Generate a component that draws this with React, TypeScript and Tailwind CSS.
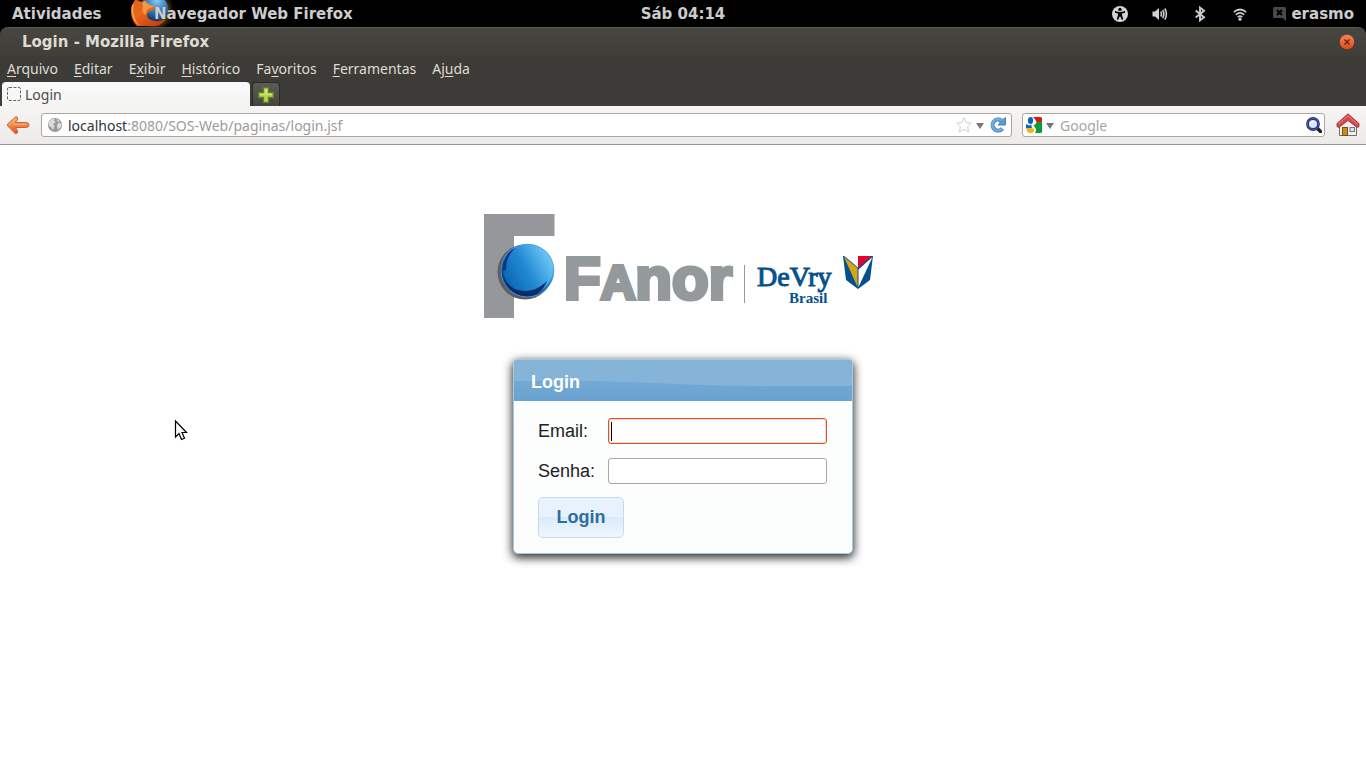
import type { ReactNode } from 'react';

const dejavu = "font-['DejaVu_Sans',sans-serif]";
const noto = "font-['Noto_Sans',sans-serif]";

function FirefoxLogo() {
  return (
    <svg width="46" height="27" viewBox="0 0 46 27" aria-hidden="true">
      <defs>
        <radialGradient id="globe" cx="0.6" cy="0.2" r="0.8">
          <stop offset="0" stopColor="#8fcaf0" />
          <stop offset="0.5" stopColor="#2f78bd" />
          <stop offset="1" stopColor="#0b2a55" />
        </radialGradient>
        <linearGradient id="fox" x1="0" y1="0" x2="0.7" y2="1">
          <stop offset="0" stopColor="#e0601c" />
          <stop offset="0.5" stopColor="#e8671d" />
          <stop offset="1" stopColor="#c8400c" />
        </linearGradient>
        <radialGradient id="tail" cx="0.5" cy="0.5" r="0.5">
          <stop offset="0.6" stopColor="#c98a22" />
          <stop offset="1" stopColor="#000000" />
        </radialGradient>
      </defs>
      <ellipse cx="25" cy="11" rx="19" ry="20" fill="url(#tail)" opacity="0.5" />
      <circle cx="24" cy="9" r="14" fill="url(#globe)" />
      <path d="M5 0C0 6 -1 18 7 26H26C31 25 34 22 35 19C30 22 22 22 18 18C16 15 17 12 21 11C23 10 25 8 25 6C21 6 17 4 15 0L12 2L7 0Z" fill="url(#fox)" />
      <path d="M12 3L15 1C17 4 21 6 25 6L20 8C17 9 15 12 16 15C12 13 12 9 13 6Z" fill="#f39a43" />
      <path d="M4 4C2 12 4 20 10 26C4 23 0 14 2 5Z" fill="#f4a04c" />
    </svg>
  );
}

function TopBar() {
  return (
    <header className={`grid h-[27px] grid-cols-[1fr_auto_1fr] items-center bg-black text-[15px] leading-5 font-bold text-[#cccccc] ${dejavu}`}>
      <div className="flex items-center pl-3">
        <button type="button" className="w-[118px] text-left">Atividades</button>
        <button type="button" className="grid h-[27px] items-center text-left">
          <span className="col-start-1 row-start-1"><FirefoxLogo /></span>
          <span className="col-start-1 row-start-1 pl-6 whitespace-nowrap">Navegador Web Firefox</span>
        </button>
      </div>
      <button type="button">Sáb 04:14</button>
      <div className="flex items-center justify-end gap-5 pr-3">
        <button type="button" aria-label="Acessibilidade" className="flex w-5 justify-center">
          <svg width="16" height="16" viewBox="0 0 16 16">
            <circle cx="8" cy="8" r="8" fill="#d2d2d2" />
            <circle cx="8" cy="3.4" r="1.7" fill="#000" />
            <path d="M3 5L7 6H9L13 5V6.8L10 7.4V9L11.3 13.3L9.8 13.8L8 10L6.2 13.8L4.7 13.3L6 9V7.4L3 6.8Z" fill="#000" />
          </svg>
        </button>
        <button type="button" aria-label="Volume" className="flex w-5 justify-center">
          <svg width="16" height="16" viewBox="0 0 16 16" fill="none" stroke="#cccccc" strokeWidth="1.6">
            <path d="M0.500 5.500H3L7 2V14L3 10.500H0.500Z" fill="#d2d2d2" stroke="none" />
            <path d="M8.700 5.500Q10.300 8 8.700 10.500M10.700 4Q13 8 10.700 12M12.800 2.500Q16 8 12.800 13.500" />
          </svg>
        </button>
        <button type="button" aria-label="Bluetooth" className="flex w-5 justify-center">
          <svg width="16" height="16" viewBox="0 0 16 16" fill="none" stroke="#cccccc" strokeWidth="1.900">
            <path d="M3.700 4.500L12 11.300L8 14.400V1.600L12 4.700L3.700 11.500" />
          </svg>
        </button>
        <button type="button" aria-label="Rede sem fio" className="flex w-5 justify-center">
          <svg width="16" height="16" viewBox="0 0 16 16" fill="none" stroke="#cccccc" strokeWidth="1.700">
            <path d="M1.800 6.200Q8 0.800 14.200 6.200M3.800 8.700Q8 5 12.200 8.700M5.800 11Q8 9.200 10.200 11" />
            <circle cx="8" cy="13.200" r="1.600" fill="#cccccc" stroke="none" />
          </svg>
        </button>
        <button type="button" className="ml-[2px] flex items-center gap-1">
          <svg width="15" height="16" viewBox="0 0 15 16" aria-hidden="true">
            <path d="M2.500 1H12.500Q14 1 14 2.500V15L10.500 12H2.500Q1 12 1 10.500V2.500Q1 1 2.500 1Z" fill="#494949" />
            <path d="M5 4L10 9M10 4L5 9" stroke="#000" strokeWidth="2" />
          </svg>
          <span>erasmo</span>
        </button>
      </div>
    </header>
  );
}

function TitleBar() {
  return (
    <div className="bg-black">
      <div className={`flex h-[29px] items-center justify-between rounded-t-lg border-t border-[#5a5852] bg-linear-to-b from-[#474641] to-[#3f3e39] pr-[11px] pl-[22px] text-[15px] leading-5 font-bold text-[#dfdbd2] ${dejavu}`}>
        <h1>Login - Mozilla Firefox</h1>
        <button type="button" aria-label="Fechar janela">
          <svg width="16" height="16" viewBox="0 0 16 16">
            <defs>
              <linearGradient id="close" x1="0" y1="0" x2="0" y2="1">
                <stop offset="0" stopColor="#f78357" />
                <stop offset="1" stopColor="#df4a1b" />
              </linearGradient>
            </defs>
            <circle cx="8" cy="8" r="7.700" fill="url(#close)" stroke="#33322e" strokeWidth="0.600" />
            <path d="M5.500 5.500L10.500 10.500M10.500 5.500L5.500 10.500" stroke="#5b2413" strokeWidth="1.300" />
          </svg>
        </button>
      </div>
    </div>
  );
}

function MenuItem({ children }: { children: ReactNode }) {
  return <button type="button" className="decoration-1 underline-offset-2">{children}</button>;
}

function MenuBar() {
  return (
    <nav className={`flex h-[26px] items-center gap-4 bg-[#3c3b37] px-[7px] pb-[2px] text-[14px] text-[#dfdbd2] ${noto}`}>
      <MenuItem><u>A</u>rquivo</MenuItem>
      <MenuItem><u>E</u>ditar</MenuItem>
      <MenuItem>E<u>x</u>ibir</MenuItem>
      <MenuItem><u>H</u>istórico</MenuItem>
      <MenuItem>Fa<u>v</u>oritos</MenuItem>
      <MenuItem><u>F</u>erramentas</MenuItem>
      <MenuItem>Aj<u>u</u>da</MenuItem>
    </nav>
  );
}

function TabBar() {
  return (
    <div className={`flex h-6 gap-[2px] bg-[#3c3b37] px-[2px] text-[14px] text-[#4c4c4c] ${noto}`}>
      <button type="button" className="flex h-full w-[248px] items-center gap-1 rounded-t bg-linear-to-b from-[#fafafa] to-[#f4f4f3] pl-[5px]">
        <svg width="14" height="14" viewBox="0 0 14 14" aria-hidden="true">
          <rect x="0.500" y="0.500" width="13" height="13" rx="1.500" fill="none" stroke="#666" strokeDasharray="3 1.500" />
        </svg>
        Login
      </button>
      <button type="button" aria-label="Nova aba" className="flex h-full w-7 items-center justify-center rounded-t border border-b-0 border-[#2b2a27] bg-linear-to-b from-[#5d5b55] to-[#44433e]">
        <svg width="16" height="16" viewBox="0 0 16 16">
          <path d="M5.500 0.700H10.500V5.500H15.300V10.500H10.500V15.300H5.500V10.500H0.700V5.500H5.500Z" fill="#b7d44c" stroke="#62812d" strokeWidth="1.300" />
          <path d="M6.800 2H9.200V6.800H14V8H2V6.800H6.800Z" fill="#d0e47a" />
        </svg>
      </button>
    </div>
  );
}

function DownArrow() {
  return (
    <svg width="8" height="8" viewBox="0 0 8 8" aria-hidden="true">
      <path d="M0 2H8L4 8Z" fill="#777777" />
    </svg>
  );
}

function Toolbar() {
  return (
    <div className={`flex h-[39px] items-center border-b border-[#979797] bg-linear-to-b from-[#f6f5f4] to-[#edebea] pr-[6px] pl-[6px] text-[14px] ${noto}`}>
      <button type="button" aria-label="Voltar" className="mr-[11px]">
        <svg width="24" height="22" viewBox="0 0 24 22">
          <defs>
            <linearGradient id="back" x1="0" y1="0" x2="0" y2="1">
              <stop offset="0" stopColor="#f5b063" />
              <stop offset="0.500" stopColor="#ef8a48" />
              <stop offset="1" stopColor="#e5501d" />
            </linearGradient>
          </defs>
          <path d="M10 2.500Q12 2.800 11.700 5L9.500 8.500H20.500Q23 8.700 23 11Q23 13.300 20.500 13.500H9.500L11.700 17Q12 19.500 9.500 19.800L1.200 11.500V10.500Z" fill="url(#back)" stroke="#cf5728" strokeWidth="0.900" strokeLinejoin="round" />
          <path d="M3 11L9 5.200M7 10.200H20" stroke="#fbd09a" strokeWidth="1.100" opacity="0.500" />
        </svg>
      </button>
      <div className="flex h-6 flex-1 items-center rounded-[3px] border border-[#a9a59f] bg-white px-[5px]">
        <svg width="16" height="16" viewBox="0 0 16 16" aria-hidden="true">
          <circle cx="8" cy="8" r="7" fill="#999999" />
          <path d="M2 5L5 2.200L8 2L7 4L9 5L6 7L7.500 9L6 13L4 10L2 9ZM9 2L13 4L11 5ZM11 6L14.500 6.500L14 9.500L11 13L10 9Z" fill="#dddddd" />
        </svg>
        <a href="#login" className="ml-[5px] flex-1 text-[#9b9b9b]">
          <span className="text-[#2e3436]">localhost</span>:8080/SOS-Web/paginas/login.jsf
        </a>
        <button type="button" aria-label="Adicionar aos favoritos">
          <svg width="16" height="16" viewBox="0 0 16 16">
            <path d="M8 0.800L10.200 5.600L15.400 6.200L11.600 9.700L12.600 14.900L8 12.300L3.400 14.900L4.400 9.700L0.600 6.200L5.800 5.600Z" fill="#fff" stroke="#cfcfcf" />
          </svg>
        </button>
        <button type="button" aria-label="Histórico de endereços" className="ml-1"><DownArrow /></button>
        <button type="button" aria-label="Recarregar" className="ml-[6px]">
          <svg width="16" height="16" viewBox="0 0 16 16" fill="none">
            <path d="M12.500 11.600A5.600 5.600 0 1 1 11.500 3.500" stroke="#4a84c0" strokeWidth="4" />
            <path d="M15.500 0.500V8H8L10.600 5.400L8.800 4.800L12.500 2.800Z" fill="#5d99d2" stroke="#4a84c0" />
            <path d="M12 11.800A5.600 5.600 0 1 1 11.500 3.500" stroke="#79afe0" strokeWidth="2" />
          </svg>
        </button>
      </div>
      <div className="ml-[10px] flex h-6 w-[303px] items-center rounded-[3px] border border-[#a9a59f] bg-white pr-[2px] pl-[3px]">
        <button type="button" aria-label="Mecanismo de busca" className="flex items-center gap-1">
          <svg width="16" height="16" viewBox="0 0 16 16">
            <path d="M7 0H14.500Q16 0 16 1.500V6L10.500 5Q10 3 7 0Z" fill="#ee1111" />
            <path d="M10.500 5L16 4.500V14.500Q16 16 14.500 16H9Q11 13 9 10.500L7.500 8.500Q10 8 10.500 5Z" fill="#0d9a3c" />
            <ellipse cx="4.500" cy="3.500" rx="2.600" ry="3.500" fill="#0d5fc4" />
            <path d="M0 7L3 8.500L5.500 7.500Q5 10 6.500 11L0 11.500Z" fill="#0d5fc4" />
            <ellipse cx="4.500" cy="13.500" rx="3.700" ry="2.400" fill="#f2b50c" />
          </svg>
          <DownArrow />
        </button>
        <input type="search" aria-label="Pesquisar" placeholder="Google" className="ml-[6px] min-w-0 flex-1 bg-transparent outline-none placeholder:text-[#a5a5a5]" />
        <button type="button" aria-label="Buscar">
          <svg width="16" height="16" viewBox="0 0 16 16">
            <path d="M10.500 10.500L14.500 14.500" stroke="#222" strokeWidth="3.500" strokeLinecap="round" />
            <circle cx="7" cy="7" r="5.500" fill="#d9e6f7" stroke="#26357f" strokeWidth="2.800" />
            <circle cx="7" cy="7" r="5.600" fill="none" stroke="#4d61b2" strokeWidth="0.800" />
            <path d="M5 6Q6 4.500 8 4.800" stroke="#fff" strokeWidth="1.500" fill="none" />
          </svg>
        </button>
      </div>
      <button type="button" aria-label="Página inicial" className="ml-[11px]">
        <svg width="24" height="24" viewBox="0 0 24 24">
          <path d="M3.500 11L12 4L20.500 11V22.500H3.500Z" fill="#f1f1ef" stroke="#6c6c6a" />
          <path d="M12 0.800L23 10.500V13.500Q22 14.800 20.500 14L12 7.500L3.500 14Q2 14.800 1 13.500V10.500Z" fill="#cf4a4a" stroke="#ad3030" strokeWidth="0.900" />
          <path d="M2.500 11L12 2.800L21.500 11" fill="none" stroke="#dd7370" strokeWidth="1.200" />
          <rect x="6.500" y="14.500" width="5" height="8" fill="#c98a20" stroke="#7a5314" />
          <rect x="14" y="14.500" width="4.500" height="4" fill="#d4e5ee" stroke="#6b7c88" />
        </svg>
      </button>
    </div>
  );
}

function FanorLogo() {
  return (
    <svg width="400" height="105" viewBox="0 0 400 105" role="img" aria-label="Fanor DeVry Brasil">
      <defs>
        <linearGradient id="sphere" x1="0" y1="0.700" x2="0.900" y2="0.200">
          <stop offset="0" stopColor="#0a62ad" />
          <stop offset="0.500" stopColor="#2188d2" />
          <stop offset="1" stopColor="#6ac6f8" />
        </linearGradient>
        <radialGradient id="rim" cx="0.520" cy="0.460" r="0.540">
          <stop offset="0.860" stopColor="#06347a" stopOpacity="0" />
          <stop offset="1" stopColor="#042c66" stopOpacity="0.900" />
        </radialGradient>
      </defs>
      <path d="M1 0H71.500V22H31V104H1Z" fill="#96979b" />
      <circle cx="42" cy="58" r="27.500" fill="#5d5e62" />
      <circle cx="44.500" cy="56.500" r="26.800" fill="#4fa3da" />
      <circle cx="44.500" cy="56.500" r="26" fill="url(#sphere)" />
      <circle cx="44.500" cy="56.500" r="26" fill="url(#rim)" />
      <path d="M20 62C24 72 32 77 42 77C51 77 58 73 64 67C60 77 53 82 44 82C32 82 23 74 20 62Z" fill="#052b6c" />
      <path d="M20 57C19 48 24 38 32 34C26 40 23 47 23 56Z" fill="#073a80" />
      <text
        x="81"
        y="85"
        fill="#94999b"
        stroke="#94999b"
        strokeWidth="4"
        fontFamily="'Liberation Sans', sans-serif"
        fontSize="60"
        fontWeight="700"
      >
        F<tspan fontSize="48">A</tspan>nor
      </text>
      <path d="M261.500 51V89" stroke="#999" />
      <g fill="#05508f" fontFamily="'Liberation Serif', serif">
        <text x="274" y="72" fontSize="28" stroke="#05508f" strokeWidth="1">DeVry</text>
        <text x="306" y="89" fontSize="15" fontWeight="700">Brasil</text>
      </g>
      <path d="M360 42L363 66L375 75L387 66L390 42Z" fill="#05508f" />
      <path d="M361 43L374.500 54V73Z" fill="#d9a514" />
      <path d="M360 41H375V53.500Z" fill="#fff" />
      <path d="M375 42H389L375 54Z" fill="#e0062f" />
      <path d="M389.500 43L375.500 55.500V73Z" fill="#fff" />
    </svg>
  );
}

function LoginCard() {
  const field = 'h-[26px] w-full rounded-[3px] border bg-white px-1 text-[18px] outline-none';
  return (
    <form
      className="mt-10 w-[340px] overflow-hidden rounded-[5px] border border-[#a6c9e2] bg-[#fcfdfd] font-['Liberation_Sans',sans-serif] text-[18px] text-[#222222] shadow-[0_3px_10px_1px_#333333]"
      onSubmit={(event) => event.preventDefault()}
    >
      <div className="grid h-[41px] items-center bg-[#6aa3d2]">
        <svg className="col-start-1 row-start-1 h-[41px] w-full" viewBox="0 0 339 41" preserveAspectRatio="none" aria-hidden="true">
          <defs>
            <linearGradient id="band" x1="0" y1="0" x2="0" y2="1">
              <stop offset="0.400" stopColor="#75aad5" />
              <stop offset="1" stopColor="#69a2d1" />
            </linearGradient>
          </defs>
          <rect width="339" height="41" fill="url(#band)" />
          <path d="M0 0H339V26H250C170 26 130 21 60 21H0Z" fill="#86b4d9" />
        </svg>
        <h2 className="col-start-1 row-start-1 pt-1 pl-[17px] font-bold text-white">Login</h2>
      </div>
      <div className="flex flex-col items-start pt-[17px] pr-[25px] pb-[15px] pl-6">
        <div className="grid w-full auto-rows-[26px] grid-cols-[70px_1fr] items-center gap-y-[14px]">
          <label htmlFor="email">Email:</label>
          <div className="relative flex">
            <input id="email" type="email" className={`${field} border-[#d4552c] caret-transparent shadow-[inset_0_0_0_1px_#fbd6c8]`} />
            <span className="absolute top-1 left-[3px] h-[19px] w-px bg-black" />
          </div>
          <label htmlFor="senha">Senha:</label>
          <input id="senha" type="password" className={`${field} border-[#aaa6a1]`} />
        </div>
        <button type="submit" className="mt-[13px] h-[41px] w-[86px] rounded-[5px] border border-[#c5dbec] bg-linear-to-b from-[#e8f2fc] from-50% via-[#dcebfa] via-50% to-[#f0f6fe] font-bold text-[#2e6e9e]">
          Login
        </button>
      </div>
    </form>
  );
}

export default function App() {
  return (
    <div className="relative flex min-h-screen flex-col bg-white">
      <TopBar />
      <TitleBar />
      <MenuBar />
      <TabBar />
      <Toolbar />
      <main className="flex flex-1 flex-col items-center bg-white pt-[69px]">
        <FanorLogo />
        <LoginCard />
      </main>
      <svg className="absolute top-[419px] left-[173px]" width="16" height="24" viewBox="0 0 16 24" aria-hidden="true">
        <path d="M2.500 2V18L6 14.500L8.500 20.500L11.500 19.200L9 13.500H13.500Z" fill="#fff" stroke="#000" strokeWidth="1.200" />
      </svg>
    </div>
  );
}
